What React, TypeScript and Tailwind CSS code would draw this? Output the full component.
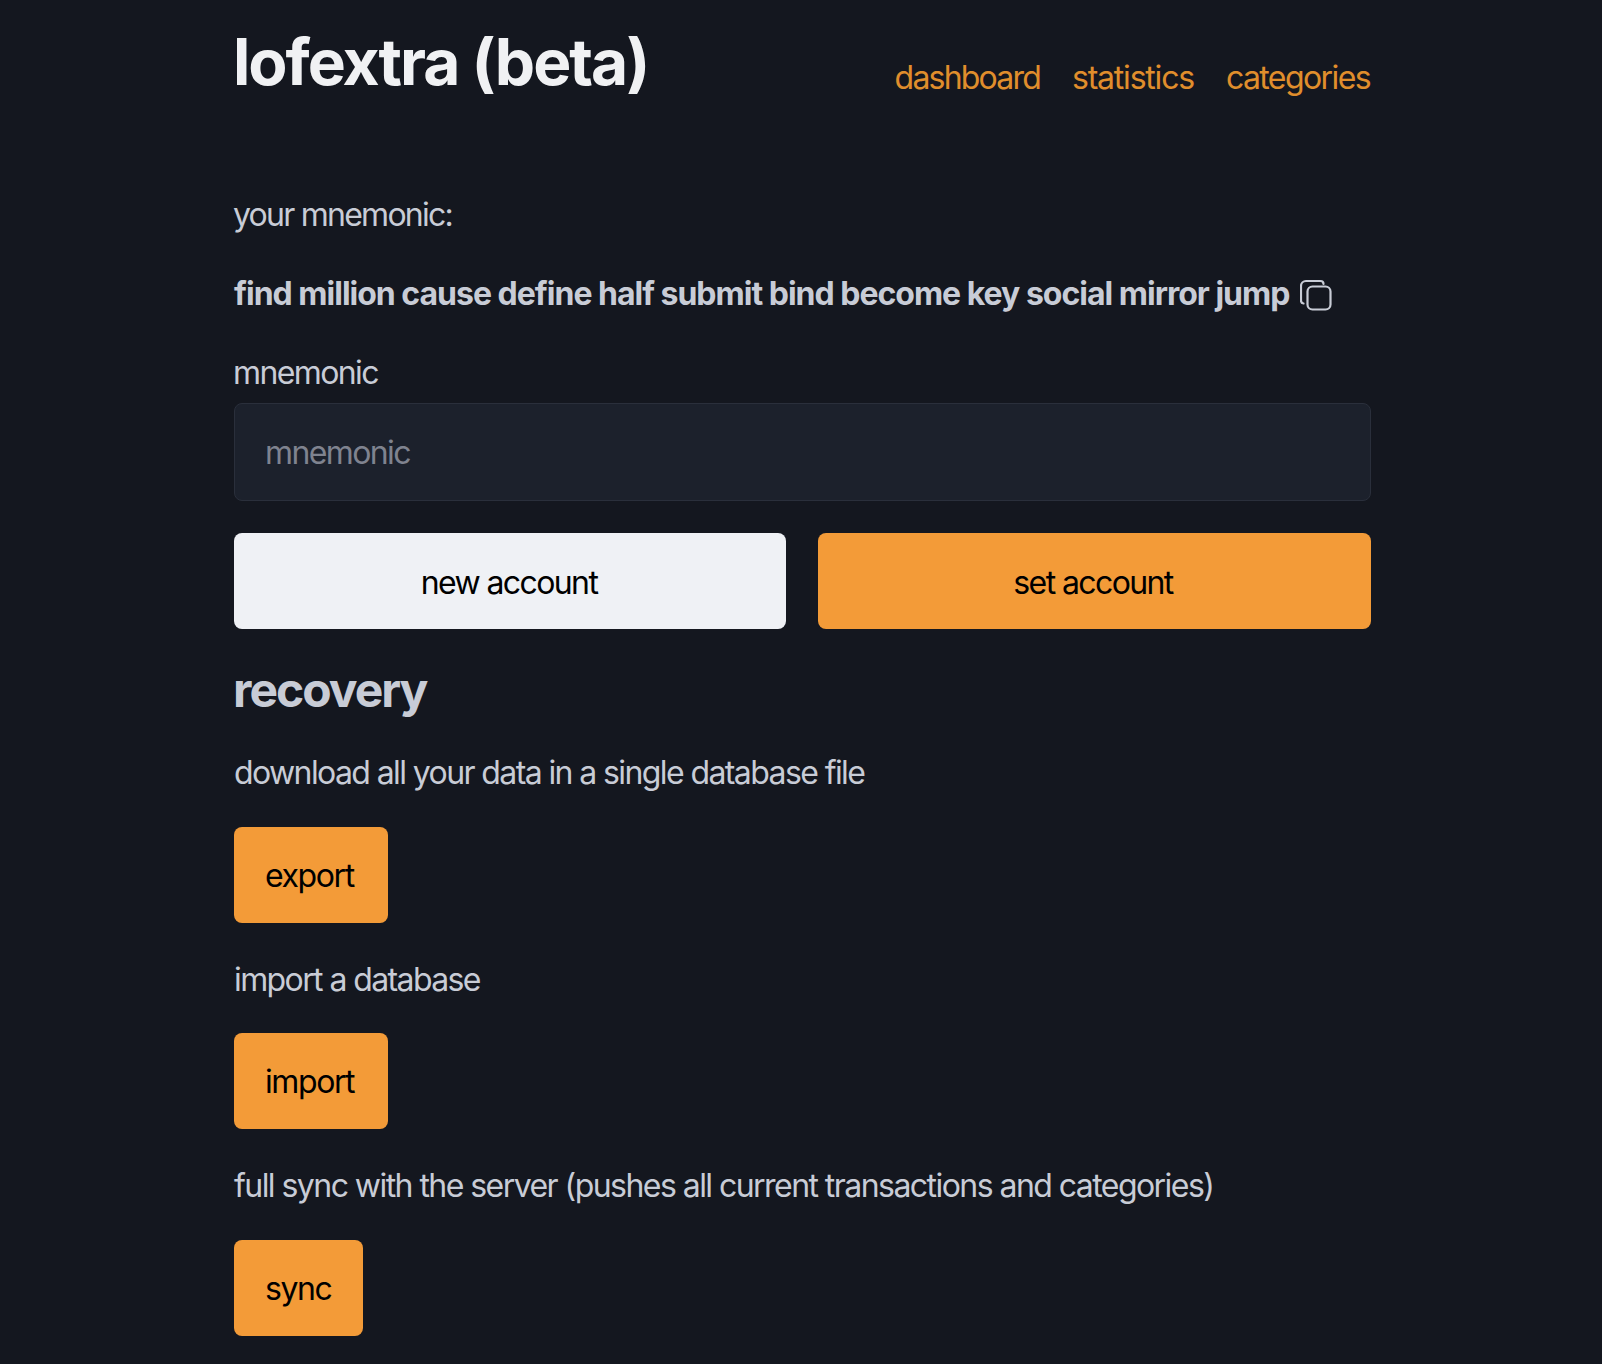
const FONT = "font-['Inter',sans-serif]";

function CopyIcon() {
  return (
    <svg viewBox="0 0 32 32" className="mt-[3px] ml-px h-8 w-8" fill="none" stroke="currentColor" strokeWidth={2.2} strokeLinecap="round">
      <rect x="7.5" y="7.5" width="23" height="23" rx="5" />
      <path d="M23.5 5a3 3 0 0 0-3-3H6a5 5 0 0 0-5 5v14.500a3 3 0 0 0 2.500 3" />
    </svg>
  );
}

function ActionButton({ label, compact }: { label: string; compact?: boolean }) {
  return (
    <button className={`block h-24 rounded-lg bg-[#f39b38] pt-[3px] pl-[31px] text-[32px] tracking-[-1.4px] text-black ${compact ? "pr-[32px]" : "pr-[34px]"}`}>
      {label}
    </button>
  );
}

export default function App() {
  return (
    <div className={`${FONT} min-h-[1364px] bg-[#14171f] text-[32px] leading-[46.5px] tracking-[-1.6px] text-[#c8ccd6]`}>
      <div className="ml-[234px] w-[1137px] pt-[24px]">
        <header className="mb-[90px] flex items-start justify-between">
          <h1 className="-ml-px text-[64px] leading-[76px] font-bold tracking-[-2px] text-[#f0f1f3]">lofextra (beta)</h1>
          <nav className="mt-[31px] mr-px flex gap-8 text-[#e08e2c]">
            <a className="tracking-[-1.8px]">dashboard</a>
            <a className="tracking-[-1.2px]">statistics</a>
            <a>categories</a>
          </nav>
        </header>

        <p className="mb-8 -ml-px tracking-[-1.75px]">your mnemonic:</p>
        <p className="mb-[31.5px] flex items-center gap-[10px] pt-[0.5px] font-bold tracking-[-1px]">
          find million cause define half submit bind become key social mirror jump
          <CopyIcon />
        </p>

        <label className="-ml-px block pt-[1.5px]">mnemonic</label>
        <input
          placeholder="mnemonic"
          className="mt-[6.5px] block h-[98px] w-full rounded-lg border border-[#2a2f3b] bg-[#1c212c] px-[30px] tracking-[-1.6px] placeholder:text-[#7f838f]"
        />

        <div className="mt-8 grid grid-cols-[552px_1fr] gap-8">
          <button className="h-24 rounded-lg bg-[#eff1f5] pt-1 pr-[2px] tracking-[-1.6px] text-black">new account</button>
          <button className="h-24 rounded-lg bg-[#f39b38] pt-1 pr-[3px] tracking-[-1.6px] text-black">set account</button>
        </div>

        <h2 className="mt-[29px] mb-[26px] -ml-px text-[48px] leading-[64px] font-bold tracking-[-2px]">recovery</h2>
        <p className="mb-[30.5px] pt-[1.5px]">download all your data in a single database file</p>
        <ActionButton label="export" />
        <p className="mt-[33px] mb-[29.5px] pt-[1.5px]">import a database</p>
        <ActionButton label="import" />
        <p className="mt-8 mb-[30.5px] pt-[1.5px] tracking-[-1.55px]">full sync with the server (pushes all current transactions and categories)</p>
        <ActionButton label="sync" compact />
      </div>
    </div>
  );
}
